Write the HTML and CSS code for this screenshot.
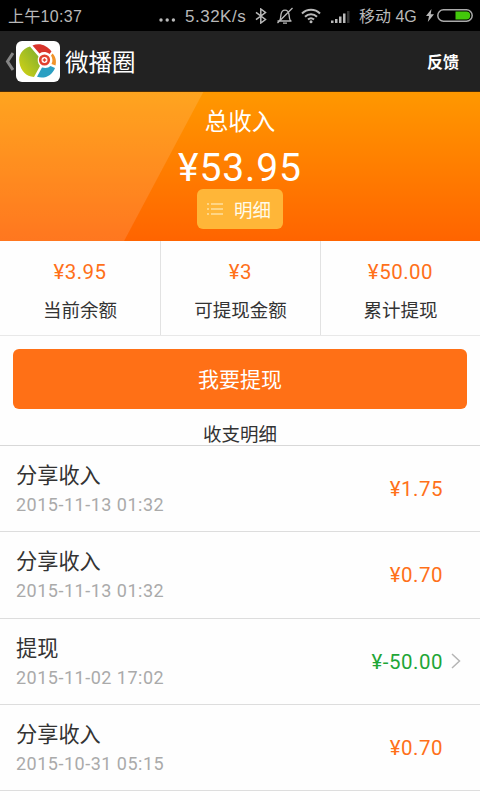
FILE: index.html
```html
<!DOCTYPE html>
<html lang="zh-CN">
<head>
<meta charset="utf-8">
<title>微播圈</title>
<link rel="stylesheet" href="styles.css">
</head>
<body>
<div class="status">
  <span class="clock">上午10:37</span>
  <div class="status-right">
    <svg class="dots" width="17" height="4" viewBox="0 0 17 4"><circle cx="2" cy="2" r="1.7"/><circle cx="8.2" cy="2" r="1.7"/><circle cx="14.4" cy="2" r="1.7"/></svg>
    <span class="speed">5.32K/s</span>
    <svg class="bt" width="12" height="16" viewBox="0 0 12 16"><path d="M1 4.3 10.5 11.5 5.8 15V1l4.7 3.5L1 11.7"/></svg>
    <svg class="bell" width="18" height="18" viewBox="0 0 18 18"><path d="M1.500 14h14M3.500 13.700c1.200-1.400 1.200-3.200 1.400-5.600.3-2.800 1.900-5 4.100-5s3.800 2.200 4.100 5c.2 2.400.2 4.200 1.400 5.600M7 16.200h4M16.500 1 1.500 16"/></svg>
    <svg class="wifi" width="20" height="16" viewBox="0 0 20 16"><path d="M1 5.500c5-5 13-5 18 0M4 8.700c3.400-3.300 8.600-3.300 12 0M7 11.600c1.800-1.700 4.200-1.700 6 0"/><circle cx="10" cy="13.700" r="1.500"/></svg>
    <svg class="signal" width="19" height="14" viewBox="0 0 19 14"><path d="M0 10.500h2.500V13H0zM4 9h2.500v4H4zM8 6.500h2.500V13H8zM12 3.500h2.500V13H12z"/><path class="off" d="M16 1h2.500v12H16z"/></svg>
    <span class="carrier">移动 4G</span>
    <svg class="bolt" width="8" height="13" viewBox="0 0 8 13"><path d="M5.500 0 0 7h3L1.800 13 8 5.300H4.700z"/></svg>
    <svg class="battery" width="36" height="13" viewBox="0 0 36 13"><rect class="shell" x=".8" y=".8" width="34.400" height="11.400" rx="5.700"/><path class="charge" d="M18.500 2.600h10.800a3.900 3.900 0 0 1 0 7.800H18.500z"/></svg>
  </div>
</div>
<header class="appbar">
  <svg class="back" width="9" height="19" viewBox="0 0 9 19"><path d="M8 1 2.500 9.500 8 18"/></svg>
  <svg class="logo" width="44" height="41" viewBox="0 0 44 41">
    <defs><linearGradient id="leaf" x1="0" y1="1" x2="1" y2="0"><stop offset="0" stop-color="#d8d414"/><stop offset="1" stop-color="#79ad2f"/></linearGradient></defs>
    <rect width="44" height="41" rx="6" fill="#fff"/>
    <path d="M14 5.500C6 8 2 14 3.500 22C5 30 10 35.500 18 36L24 25C21.500 22 21 18.500 22.500 15.500Z" fill="url(#leaf)"/>
    <path d="M16.500 4.500C23 1.500 31 4 35.500 10.500L33.500 13C30 10.500 26.500 10.500 23.500 12.500Z" fill="#d8342c"/>
    <path d="M36.500 12.500C40 16 40.500 20.500 39.500 24.500L35.500 23C37 20 36.500 17 35 14.500Z" fill="#f0932b"/>
    <path d="M26 26.500C29.500 27.500 32.500 27 34.500 25L39 27C36.500 34 29 38.500 21 35.800Z" fill="#2b9fc2"/>
    <circle cx="28.500" cy="19" r="4.300" fill="#fff" stroke="#e1402f" stroke-width="2.600"/><path d="M26.800 19h3.400M28.500 17.300v3.400" stroke="#e1402f" stroke-width="1.300"/>
  </svg>
  <h1 class="title">微播圈</h1>
  <span class="feedback">反馈</span>
</header>
<section class="hero">
  <div class="hero-label">总收入</div>
  <div class="hero-amount">¥53.95</div>
  <div class="detail">
    <svg width="16" height="12" viewBox="0 0 16 12"><path d="M0 1h2M4 1h12M0 6h2M4 6h12M0 11h2M4 11h12"/></svg>
    <span>明细</span>
  </div>
</section>
<section class="stats">
  <div class="stat"><div class="stat-value">¥3.95</div><div class="stat-label">当前余额</div></div>
  <div class="stat"><div class="stat-value">¥3</div><div class="stat-label">可提现金额</div></div>
  <div class="stat"><div class="stat-value">¥50.00</div><div class="stat-label">累计提现</div></div>
</section>
<div class="withdraw">我要提现</div>
<h2 class="list-title">收支明细</h2>
<ul class="list">
  <li class="row"><div class="info"><div class="name">分享收入</div><div class="date">2015-11-13 01:32</div></div><div class="amount">¥1.75</div></li>
  <li class="row"><div class="info"><div class="name">分享收入</div><div class="date">2015-11-13 01:32</div></div><div class="amount">¥0.70</div></li>
  <li class="row"><div class="info"><div class="name">提现</div><div class="date">2015-11-02 17:02</div></div><div class="amount out">¥-50.00</div><svg class="chevron" width="10" height="16" viewBox="0 0 10 16"><path d="m1 1 7.500 7L1 15"/></svg></li>
  <li class="row"><div class="info"><div class="name">分享收入</div><div class="date">2015-10-31 05:15</div></div><div class="amount">¥0.70</div></li>
</ul>
</body>
</html>
```

FILE: styles.css
```css
* { box-sizing: border-box; }
body {
  margin: 0;
  height: 800px;
  overflow: hidden;
  background: #fefefe;
  color: #333;
  font-family: Roboto, "Noto Sans CJK SC", sans-serif;
}
svg { display: block; flex: none; fill: none; }

.status {
  display: flex;
  justify-content: space-between;
  align-items: center;
  height: 31px;
  padding: 0 7px 0 8px;
  background: #000;
  color: #b9b9b9;
  font: 17px/31px "Liberation Sans", "Noto Sans CJK SC", sans-serif;
  white-space: nowrap;
}
.clock { font-size: 16px; letter-spacing: .3px; padding-top: 1px; }
.status-right { display: flex; align-items: center; }
.dots { fill: #b9b9b9; margin: 8px 9px 0 0; }
.speed { width: 61px; letter-spacing: .5px; padding-top: 1px; }
.bt { stroke: #b9b9b9; stroke-width: 1.5; margin: 0 9px 0 9px; }
.bell { stroke: #b9b9b9; stroke-width: 1.3; margin-right: 7px; }
.wifi { stroke: #b9b9b9; stroke-width: 2; margin-right: 10px; }
.wifi circle { fill: #b9b9b9; stroke: none; }
.signal { fill: #b9b9b9; margin: 2px 9px 0 0; }
.signal .off { fill: #333; }
.carrier { width: 58px; font-size: 16px; padding-top: 1px; }
.bolt { fill: #b9b9b9; margin: 0 3px 0 9px; }
.shell { stroke: #aaa; stroke-width: 1.5; }
.charge { fill: #43c80b; }

.appbar {
  display: flex;
  align-items: center;
  height: 61px;
  padding: 0 21px 0 5px;
  background: #222;
  border-bottom: 1px solid #4a2c08;
  color: #fff;
}
.back { stroke: #858585; stroke-width: 3; margin-right: 2px; }
.title { flex: 1; margin: 0 0 0 5px; padding-top: 3px; font-size: 23.5px; font-weight: 400; line-height: 30px; }
.feedback { font-size: 16px; font-weight: 700; }

.hero {
  display: flex;
  flex-direction: column;
  align-items: center;
  height: 149px;
  padding-top: 14px;
  color: #fff;
  background:
    linear-gradient(118deg, rgba(255,255,255,.12) 0 179px, transparent 180px),
    linear-gradient(#ff9800, #ff6400);
}
.hero-label { font-size: 23.5px; line-height: 32px; }
.hero-amount { font-size: 39px; line-height: 46px; margin-top: 7px; letter-spacing: .9px; }
.detail {
  display: flex;
  align-items: center;
  gap: 11px;
  width: 86px;
  height: 40px;
  padding-left: 10px;
  margin-top: -2px;
  border-radius: 6px;
  background: #ffb638;
  color: #fffbea;
  font-size: 18.5px;
}
.detail svg { stroke: #fff3d0; stroke-width: 1.2; }

.stats {
  display: grid;
  grid-template-columns: repeat(3, 1fr);
  height: 95px;
  border-bottom: 1px solid #e8e8e8;
  text-align: center;
}
.stat { padding-top: 18px; }
.stat + .stat { border-left: 1px solid #e2e2e2; }
.stat-value { color: #ff7019; font-size: 20.5px; line-height: 26px; letter-spacing: .5px; }
.stat-label { margin-top: 13px; font-size: 18.5px; line-height: 26px; }

.withdraw {
  height: 60px;
  margin: 13px 13px 0;
  padding-top: 1px;
  border-radius: 6px;
  background: #ff7016;
  color: #fff;
  font-size: 21px;
  line-height: 60px;
  text-align: center;
}
.list-title { height: 36px; margin: 0; padding-top: 13px; font-size: 18.5px; font-weight: 400; line-height: 26px; text-align: center; }
.list { list-style: none; margin: 0; padding: 0; border-top: 1px solid #d8d8d8; }
.row { display: flex; align-items: center; position: relative; height: 86.3px; padding: 0 37px 0 16px; border-bottom: 1px solid #ddd; }
.info { flex: 1; padding-top: 2px; }
.name { font-size: 21.2px; line-height: 30px; }
.date { margin-top: 1px; color: #aaa; font-size: 18px; line-height: 26px; letter-spacing: .5px; }
.amount { padding-top: 1px; color: #ff7019; font-size: 20.5px; line-height: 26px; letter-spacing: .5px; }
.amount.out { color: #1fa637; }
.chevron { position: absolute; right: 19px; top: 34px; stroke: #b5b5b5; stroke-width: 1.5; }
```
